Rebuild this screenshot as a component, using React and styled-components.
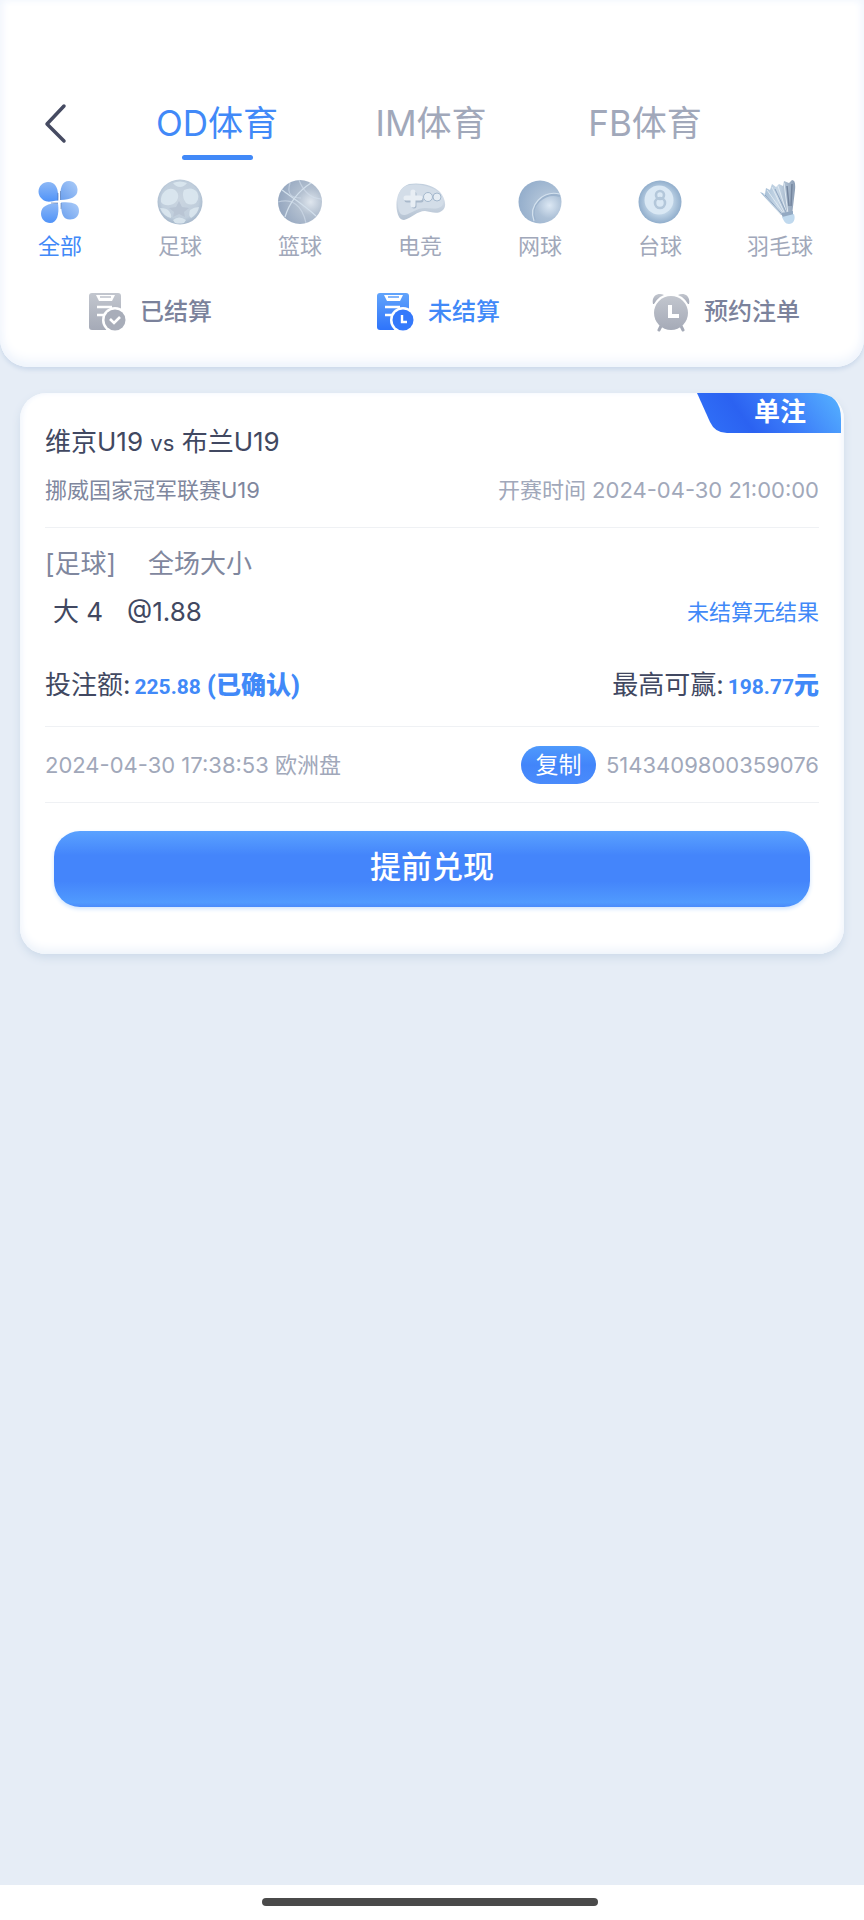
import React from 'react';
import styled, { createGlobalStyle } from 'styled-components';

const Global = createGlobalStyle`
  * { box-sizing: border-box; }
  body {
    margin: 0;
    background: #e6edf6;
    font-family: Inter, "Noto Sans CJK SC", sans-serif;
    color: #414861;
  }
  button { font-family: inherit; border: 0; padding: 0; background: none; cursor: pointer; }
  p, h2 { margin: 0; font-weight: 400; }
`;

const Page = styled.div`
  min-height: 100vh;
  display: flex;
  flex-direction: column;
`;

const Header = styled.header`
  padding: 88px 0 30px;
  background: #fff;
  border-radius: 0 0 28px 28px;
  box-shadow: inset 0 -6px 12px #eff4fc, inset 0 0 8px #f2f6fd, 0 3px 4px #cddaeb;
`;

const TopBar = styled.div`
  display: flex;
  align-items: center;
  height: 72px;
`;

const BackButton = styled.button`
  display: flex;
  width: 110px;
  padding-left: 43px;
`;

const Tabs = styled.nav`
  flex: 1;
  display: grid;
  grid-template-columns: repeat(3, 1fr);
  padding-right: 112px;
`;

const Tab = styled.button`
  display: flex;
  flex-direction: column;
  align-items: center;
  justify-content: flex-end;
  height: 72px;
  font-size: 35px;
  line-height: 64px;
  white-space: nowrap;
  color: ${(p) => (p.$active ? '#4189f8' : '#a1a8ba')};
  &::after {
    content: '';
    width: 71px;
    height: 5px;
    border-radius: 3px;
    background: ${(p) => (p.$active ? '#4189f8' : 'transparent')};
  }
`;

const Sports = styled.div`
  display: grid;
  grid-template-columns: repeat(7, 1fr);
  padding: 18px 24px 0 0;
`;

const Sport = styled.button`
  display: flex;
  flex-direction: column;
  align-items: center;
  gap: 4px;
  font-size: 22px;
  line-height: 32px;
  color: ${(p) => (p.$active ? '#4189f8' : '#a1a8ba')};
`;

const Filters = styled.div`
  display: grid;
  grid-template-columns: repeat(3, 1fr);
  margin-top: 25px;
`;

const Filter = styled.button`
  display: flex;
  align-items: center;
  justify-content: center;
  gap: 14px;
  height: 50px;
  padding-left: 12px;
  font-size: 24px;
  line-height: 34px;
  font-weight: 500;
  color: ${(p) => (p.$active ? '#4189f8' : '#7b829b')};
`;

const Main = styled.main`
  flex: 1;
  padding: 26px 20px;
`;

const Card = styled.article`
  position: relative;
  padding: 29px 25px 47px;
  background: #fff;
  border-radius: 26px;
  box-shadow: inset 0 -5px 10px #eff4fb, inset 0 0 6px #f4f7fd, 0 4px 8px #cedbea;
`;

const Badge = styled.div`
  position: absolute;
  top: 0;
  right: 3px;
  width: 144px;
  height: 40px;
  padding-left: 22px;
  color: #fff;
  font-size: 26px;
  line-height: 38px;
  font-weight: 700;
  text-align: center;
  svg { position: absolute; left: 0; top: 0; }
  span { position: relative; }
`;

const Row = styled.div`
  display: flex;
  align-items: center;
  justify-content: space-between;
  height: ${(p) => p.$h}px;
  line-height: 36px;
  white-space: nowrap;
`;

const Section = styled.section`
  border-bottom: 1px solid #eff1f4;
  padding: ${(p) => p.$pad || '0'};
`;

const Match = styled.h2`
  font-size: 26px;
  line-height: 40px;
  small { font-size: 22px; }
`;

const Muted = styled.span`
  font-size: 22px;
  color: ${(p) => (p.$dark ? '#7f879e' : '#a1a8ba')};
`;

const Market = styled.span`
  display: flex;
  gap: 32px;
  font-size: 26px;
  color: #7f879e;
`;

const Pick = styled.span`
  display: flex;
  gap: 24px;
  padding-left: 8px;
  font-size: 26px;
`;

const Result = styled.span`
  font-size: 22px;
  color: #4189f8;
`;

const Stakes = styled(Row)`
  margin-top: 20px;
`;

const Amount = styled.p`
  display: flex;
  align-items: baseline;
  gap: 4px;
  font-size: 26px;
  strong {
    font-family: Roboto, "Noto Sans CJK SC", sans-serif;
    font-size: 25px;
    font-weight: 900;
    color: #4189f8;
  }
  data {
    font-size: 21px;
    font-weight: 700;
  }
`;

const Order = styled.div`
  display: flex;
  align-items: center;
  gap: 10px;
`;

const CopyButton = styled.button`
  width: 75px;
  height: 38px;
  border-radius: 19px;
  background: linear-gradient(#4f9afc, #4285fa 50%, #4a8bfb);
  color: #fff;
  font-size: 23px;
  line-height: 36px;
`;

const CashOut = styled.button`
  display: block;
  width: calc(100% - 18px);
  height: 76px;
  margin: 28px 9px 0;
  padding-bottom: 5px;
  border-radius: 26px;
  background: linear-gradient(#5aa2ff, #4485fb 32%, #4485fb 66%, #509afe 94%, #4a8bfb);
  box-shadow: 0 2px 4px #cfe4fd;
  color: #fff;
  font-size: 31px;
  font-weight: 500;
  line-height: 44px;
`;

const HomeBar = styled.footer`
  display: flex;
  justify-content: center;
  height: 35px;
  padding-top: 13px;
  background: #fff;
  &::after {
    content: '';
    width: 39%;
    height: 8px;
    margin-right: 4px;
    border-radius: 4px;
    background: #4a4a4a;
  }
`;

const Sprite = styled.svg`
  display: block;
`;

function Defs() {
  return (
    <Sprite width="0" height="0" aria-hidden="true">
      <defs>
        <linearGradient id="petal" x1="0" y1="0" x2="0" y2="1">
          <stop offset="0" stopColor="#8db8f6" /><stop offset="1" stopColor="#5093f8" />
        </linearGradient>
        <linearGradient id="petalLight" x1="1" y1="0" x2="0" y2="1">
          <stop offset="0" stopColor="#acccf8" /><stop offset="1" stopColor="#6a9fee" />
        </linearGradient>
        <radialGradient id="ball" cx=".5" cy=".45" r=".56">
          <stop offset="0" stopColor="#cad5e0" /><stop offset=".75" stopColor="#c0cedc" /><stop offset="1" stopColor="#a3b5c9" />
        </radialGradient>
        <radialGradient id="basket" cx=".74" cy=".5" r=".75">
          <stop offset="0" stopColor="#dfe6ee" /><stop offset=".4" stopColor="#b3c0d0" /><stop offset="1" stopColor="#94a6bf" />
        </radialGradient>
        <radialGradient id="tennis" cx=".72" cy=".58" r=".75">
          <stop offset="0" stopColor="#dce8f4" /><stop offset=".4" stopColor="#adc1d7" /><stop offset="1" stopColor="#93adcb" />
        </radialGradient>
        <radialGradient id="pool" cx=".5" cy=".5" r=".5">
          <stop offset=".55" stopColor="#c2d6e8" /><stop offset="1" stopColor="#91aecc" />
        </radialGradient>
        <linearGradient id="pad" x1="0" y1="0" x2="0" y2="1">
          <stop offset="0" stopColor="#c0cedd" /><stop offset=".4" stopColor="#d5dee9" /><stop offset="1" stopColor="#b3c1d1" />
        </linearGradient>
        <linearGradient id="feather" x1="0" y1="0" x2="1" y2="0">
          <stop offset="0" stopColor="#9db8d2" /><stop offset=".5" stopColor="#c7d7e6" /><stop offset="1" stopColor="#8c9eb5" />
        </linearGradient>
        <linearGradient id="grey" x1="0" y1="0" x2="0" y2="1">
          <stop offset="0" stopColor="#c2c6ce" /><stop offset="1" stopColor="#a5aab7" />
        </linearGradient>
        <linearGradient id="blue" x1="0" y1="0" x2="0" y2="1">
          <stop offset="0" stopColor="#62a4fb" /><stop offset="1" stopColor="#2e74fb" />
        </linearGradient>
        <linearGradient id="badge" x1="0" y1=".3" x2="1" y2=".1">
          <stop offset="0" stopColor="#2f6df6" /><stop offset=".25" stopColor="#2b62f1" /><stop offset=".55" stopColor="#3c7cf9" /><stop offset="1" stopColor="#55b1ff" />
        </linearGradient>
      </defs>
    </Sprite>
  );
}

const Icon = ({ w = 48, children }) => (
  <svg width={w} height="48" viewBox={`0 0 ${w} 48`} fill="none" aria-hidden="true">{children}</svg>
);

const icons = {
  all: (
    <Icon>
      <path d="M22 22.500C17 23 14 24 11 23.500C6 22.500 2.500 18 2.500 13.500C2.500 8 7 4 12 4C20 4 23 11 22 22.500Z" fill="url(#petal)" />
      <path d="M24.500 22C23.500 10 26 3 33 3C38 3 41.500 7 41.500 12C41.500 19 35 21.500 24.500 22Z" fill="url(#petalLight)" />
      <path d="M22 25C23.500 37 21 45 14 45C9 45 5 41 5 35.500C5 28 12 25.500 22 25Z" fill="url(#petal)" />
      <path d="M25 24.500C37 23.500 43 26 43 33C43 38 39 41.500 34 41.500C27 41.500 25 36 25 24.500Z" fill="url(#petalLight)" />
      <path d="M22 22.500V15M24.500 22V13M25 25V31M22 25H15" stroke="#3f65a3" opacity=".55" />
    </Icon>
  ),
  football: (
    <Icon>
      <circle cx="24" cy="24" r="22.500" fill="url(#ball)" />
      <g fill="#dde9f1" opacity=".85">
        <path d="M9 13Q14 9 19 12Q23 15 22 20Q20 26 14 27Q8 28 5 24Q4 18 9 13Z" />
        <path d="M28 12Q36 8 41 14Q44 20 40 25Q35 28 30 25Q25 18 28 12Z" />
        <path d="M17 5Q24 2 31 5Q28 9 24 9Q20 9 17 5Z" />
        <path d="M4 30Q11 30 13 33Q16 37 15 40Q7 38 4 30Z" />
        <path d="M34 32Q38 29 43 29Q42 36 35 40Q32 37 34 32Z" />
        <path d="M17 42Q23 37 30 42L28 45Q23 46 19 45Z" />
      </g>
      <path d="M23 23L26 29L33 30L28 34L29 39L23 36L17 39L18 34L13 30L20 29Z" fill="#b9c5d4" />
    </Icon>
  ),
  basketball: (
    <Icon>
      <circle cx="24" cy="24" r="22" fill="url(#basket)" />
      <g stroke="#d3e0ec" strokeWidth="1.200">
        <path d="M6 12C17 20 31 29 40 38" />
        <path d="M35 5C21 14 13 26 9 39" />
        <path d="M14 5C11 15 14 20 25 20" opacity=".6" />
        <path d="M2 24C16 20 26 27 30 45" opacity=".6" />
        <path d="M23 2C27 13 34 20 45 21" opacity=".6" />
      </g>
    </Icon>
  ),
  esports: (
    <Icon w={52}>
      <path d="M3 33C1 22 4 10 15 6C26 4 40 7 46 14C51 20 53 28 49 32C44 37 37 34 31 33C23 33 18 40 10 42C6 42 4 38 3 33Z" fill="url(#pad)" />
      <path d="M4 27C3 14 8 8 16 7C26 5 40 9 45 15C49 20 50 26 48 28C43 32 37 30 31 30C23 30 18 35 11 37C6 38 4 32 4 27Z" fill="#d3dde8" />
      <path d="M20 16V28M13 22H27" stroke="#a9b9cb" strokeWidth="5" strokeLinecap="round" />
      <path d="M19 14V27M12 20H26" stroke="#e8eef4" strokeWidth="5" strokeLinecap="round" />
      <circle cx="34" cy="19" r="4.500" fill="#e6edf4" stroke="#a4b8cd" />
      <circle cx="43" cy="19" r="4" fill="#e6edf4" stroke="#a4b8cd" />
    </Icon>
  ),
  tennis: (
    <Icon>
      <circle cx="24" cy="24" r="21.500" fill="url(#tennis)" />
      <path d="M44 18C28 13 13 28 19 42" stroke="#9cb3cd" strokeWidth="2" />
      <path d="M44 16C27 12 12 27 18 43" stroke="#d3e1ee" strokeWidth="1.200" />
    </Icon>
  ),
  pool: (
    <Icon>
      <circle cx="24" cy="24" r="21.500" fill="url(#pool)" />
      <circle cx="23" cy="22" r="14.500" fill="#dae8f4" />
      <circle cx="24" cy="17" r="4" stroke="#b3c7da" strokeWidth="2.600" />
      <circle cx="24" cy="25" r="5" stroke="#b3c7da" strokeWidth="2.600" />
    </Icon>
  ),
  shuttle: (
    <Icon>
      <path d="M4 14L9 16L10 10L14 12L16 6L20 9L23 6L27 8L28 3L33 5L36 2Q40 2 39 12L36 37L25 37Z" fill="url(#feather)" />
      <path d="M7 15L26 36M11 12L28 36M16 9L29 36M22 8L31 36M28 5L32 36" stroke="#dfe9f2" />
      <path d="M31 8L33 28M36 6L35 28" stroke="#74859e" strokeWidth="1.500" />
      <path d="M9 17L25 35M19 11L30 34" stroke="#8ea4bf" />
      <path d="M25 35L37 33L37 37L27 40Z" fill="#93a9c2" />
      <path d="M26 39L38 36C40 42 37 46 33 46C29 46 28 43 26 39Z" fill="#c0d9ee" />
    </Icon>
  ),
};

const FilterIcon = ({ kind }) => {
  const fill = kind === 'open' ? 'url(#blue)' : 'url(#grey)';
  if (kind === 'alarm') {
    return (
      <svg width="38" height="40" viewBox="0 0 38 40" fill="none" aria-hidden="true">
        <path d="M1 12C-1 3 7 0 12 3L8 5Q4 8 2 12ZM37 12C39 3 31 0 26 3L30 5Q34 8 36 12Z" fill={fill} />
        <path d="M9 34L7 38M29 34L31 38" stroke="#a5aab7" strokeWidth="3" strokeLinecap="round" />
        <circle cx="19" cy="21" r="17" fill={fill} />
        <path d="M18 13V24H27" stroke="#fff" strokeWidth="4" />
      </svg>
    );
  }
  return (
    <svg width="38" height="40" viewBox="0 0 38 40" fill="none" aria-hidden="true">
      <rect x="1" y="1" width="32" height="37" rx="3" fill={fill} />
      <path d="M8 3H27L24 9H11Z" fill="#fff" />
      <path d="M12 5H23" stroke={kind === 'open' ? '#5b9efb' : '#bdc1ca'} strokeWidth="1.500" />
      <path d="M9 15H24M9 23H18" stroke="#fff" strokeWidth="2.400" />
      <circle cx="27" cy="28" r="13" fill="#fff" />
      <circle cx="27" cy="28" r="10.500" fill={kind === 'open' ? '#3579fb' : '#a8adb9'} />
      {kind === 'open'
        ? <path d="M26 23V30H31" stroke="#fff" strokeWidth="2.400" />
        : <path d="M22 27L26 31L32 25" stroke="#fff" strokeWidth="2.600" />}
    </svg>
  );
};

const tabs = ['OD体育', 'IM体育', 'FB体育'];
const sports = [
  ['all', '全部'], ['football', '足球'], ['basketball', '篮球'], ['esports', '电竞'],
  ['tennis', '网球'], ['pool', '台球'], ['shuttle', '羽毛球'],
];
const filters = [['settled', '已结算'], ['open', '未结算'], ['alarm', '预约注单']];

export default function App() {
  return (
    <Page>
      <Global />
      <Defs />
      <Header>
        <TopBar>
          <BackButton aria-label="返回">
            <svg width="26" height="42" viewBox="0 0 26 42" fill="none">
              <path d="M21 3L4 21L21 38" stroke="#464b62" strokeWidth="3.500" strokeLinecap="round" strokeLinejoin="round" />
            </svg>
          </BackButton>
          <Tabs>
            {tabs.map((t, i) => <Tab key={t} $active={i === 0}>{t}</Tab>)}
          </Tabs>
        </TopBar>
        <Sports>
          {sports.map(([k, label], i) => (
            <Sport key={k} $active={i === 0}>{icons[k]}{label}</Sport>
          ))}
        </Sports>
        <Filters>
          {filters.map(([k, label]) => (
            <Filter key={k} $active={k === 'open'}><FilterIcon kind={k} />{label}</Filter>
          ))}
        </Filters>
      </Header>
      <Main>
        <Card>
          <Badge>
            <svg width="144" height="40" viewBox="0 0 144 40" aria-hidden="true">
              <path d="M0 0H118Q144 0 144 26V40H30Q18 40 13 29Z" fill="url(#badge)" />
            </svg>
            <span>单注</span>
          </Badge>
          <Section $pad="0 0 10px">
            <Match>维京U19 <small>vs</small> 布兰U19</Match>
            <Row $h={54}>
              <Muted $dark>挪威国家冠军联赛U19</Muted>
              <Muted>开赛时间 2024-04-30 21:00:00</Muted>
            </Row>
          </Section>
          <Section $pad="12px 0 10px">
            <Row $h={48}>
              <Market><span>[足球]</span><span>全场大小</span></Market>
            </Row>
            <Row $h={48}>
              <Pick><span>大 4</span><span>@1.88</span></Pick>
              <Result>未结算无结果</Result>
            </Row>
            <Stakes $h={60}>
              <Amount>投注额:<strong><data value="225.88">225.88</data> (已确认)</strong></Amount>
              <Amount>最高可赢:<strong><data value="198.77">198.77</data>元</strong></Amount>
            </Stakes>
          </Section>
          <Section>
            <Row $h={75}>
              <Muted>2024-04-30 17:38:53 欧洲盘</Muted>
              <Order>
                <CopyButton>复制</CopyButton>
                <Muted>5143409800359076</Muted>
              </Order>
            </Row>
          </Section>
          <CashOut>提前兑现</CashOut>
        </Card>
      </Main>
      <HomeBar />
    </Page>
  );
}
